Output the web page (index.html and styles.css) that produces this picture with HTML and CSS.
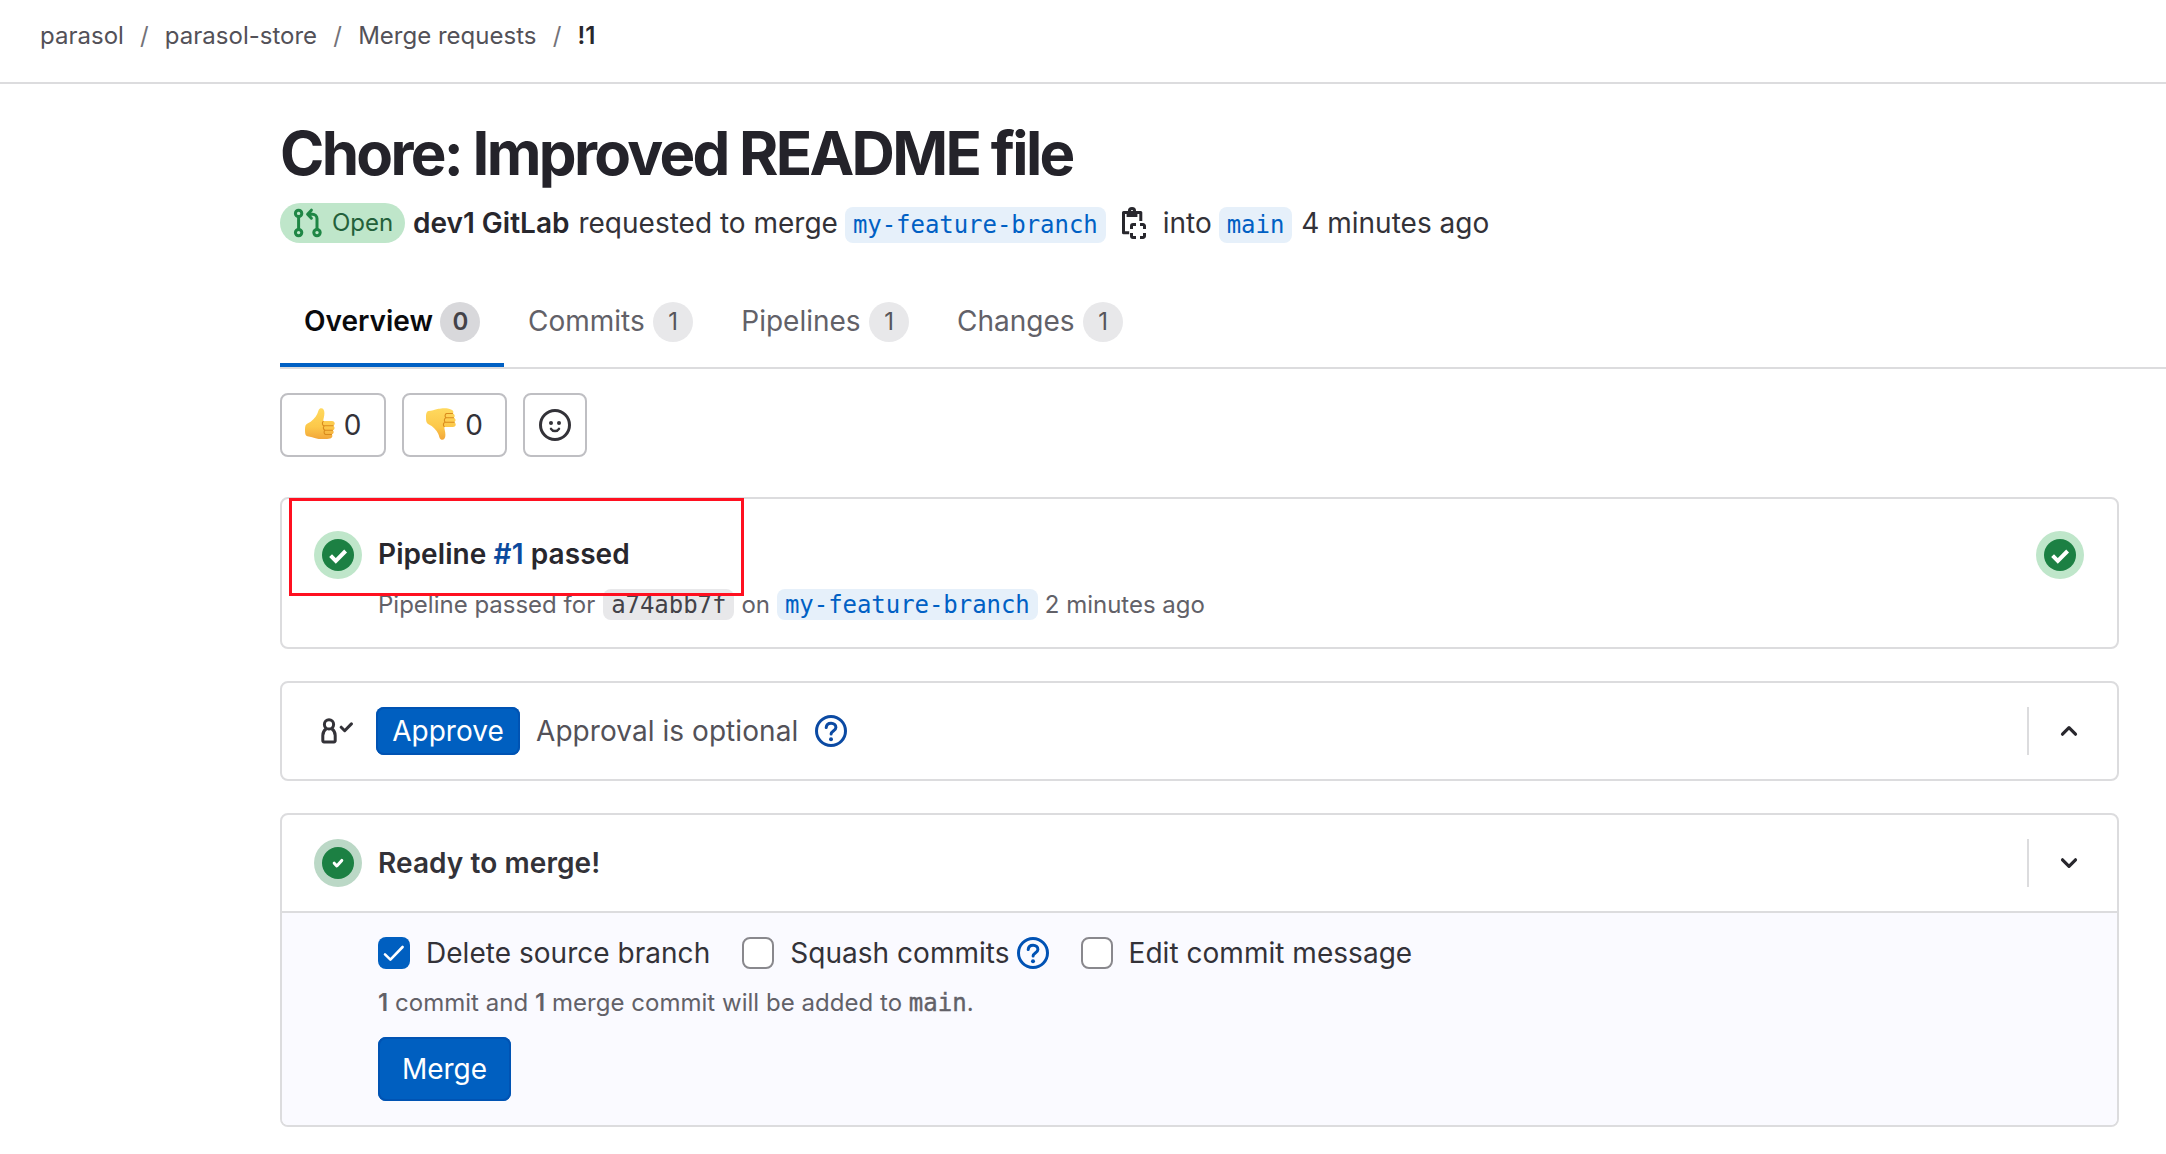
FILE: index.html
```html
<!DOCTYPE html>
<html lang="en">
<head>
<meta charset="utf-8">
<title>Chore: Improved README file (!1)</title>
<link rel="stylesheet" href="styles.css">
</head>
<body>
<svg class="defs" aria-hidden="true">
  <defs>
    <linearGradient id="skin" x1="0" y1="0" x2="0" y2="1">
      <stop offset="0" stop-color="#ffd95e"/>
      <stop offset=".6" stop-color="#fcc84a"/>
      <stop offset="1" stop-color="#f2a63a"/>
    </linearGradient>
    <symbol id="question" viewBox="0 0 16 16">
      <circle cx="8" cy="8" r="7.25" fill="none" stroke="currentColor" stroke-width="1.5"/>
      <path d="M5.6 6.3C5.7 4.9 6.7 4.1 8.05 4.1c1.4 0 2.4.85 2.4 2.1 0 1.7-2.4 1.9-2.4 3.3" fill="none" stroke="currentColor" stroke-width="1.5" stroke-linecap="round"/>
      <circle cx="8" cy="12.1" r="1" fill="currentColor"/>
    </symbol>
    <symbol id="chevron" viewBox="0 0 16 16">
      <path d="M4.75 6.4 8 9.65l3.25-3.25" fill="none" stroke="currentColor" stroke-width="1.6" stroke-linecap="round" stroke-linejoin="round"/>
    </symbol>
    <symbol id="check-big" viewBox="0 0 16 16">
      <path d="M4.3 8.3 6.9 10.9 11.8 6" fill="none" stroke="#fff" stroke-width="2"/>
    </symbol>
    <symbol id="check-small" viewBox="0 0 16 16">
      <path d="M6.1 8.1 7.4 9.5 9.9 6.7" fill="none" stroke="#fff" stroke-width="1.5" stroke-linecap="round" stroke-linejoin="round"/>
    </symbol>
  </defs>
</svg>

<nav class="breadcrumbs">
  <a class="crumb">parasol</a><span class="sep">/</span><a class="crumb">parasol-store</a><span class="sep">/</span><a class="crumb">Merge requests</a><span class="sep">/</span><b class="crumb-current">!1</b>
</nav>

<main class="content">
  <h1 class="title">Chore: Improved README file</h1>

  <div class="meta">
    <span class="state">
      <svg class="icon" viewBox="0 0 16 16" fill="none" stroke="currentColor" stroke-width="1.5" stroke-linecap="round" stroke-linejoin="round"><circle cx="3.3" cy="3.2" r="1.6"/><circle cx="3.3" cy="12.8" r="1.6"/><circle cx="12.5" cy="12.8" r="1.6"/><path d="M3.3 4.8v6.4M12.5 11.2V5.8a2.2 2.2 0 0 0-2.2-2.2H8M9.7 1.6 7.8 3.6l1.9 2"/></svg>
      <span>Open</span>
    </span>
    <b class="author">dev1 GitLab</b>
    <span class="phrase">requested to merge</span>
    <a class="ref ref-lg">my-feature-branch</a>
    <svg class="icon copy" viewBox="0 0 16 16" fill="none" stroke="currentColor" stroke-width="1.5" stroke-linejoin="round"><path d="M5.6 12.9H2.75V2.75h8.65V7"/><circle cx="7" cy="2.1" r="1.3"/><path d="M4.3 3h5.4v2H4.3z" fill="currentColor" stroke="none"/><path d="M6.75 11V9.500a.75.75 0 0 1 .75-.75H9M11 8.750h1.500a.75.75 0 0 1 .75.75V11M6.750 13v1.500a.75.75 0 0 0 .75.75H9M11 15.250h1.500a.75.75 0 0 0 .75-.75V13"/></svg>
    <span class="into">into</span>
    <a class="ref ref-lg">main</a>
    <span class="when">4 minutes ago</span>
  </div>

  <div class="tabs">
    <a class="tab active"><span>Overview</span><span class="count">0</span></a>
    <a class="tab"><span>Commits</span><span class="count">1</span></a>
    <a class="tab"><span>Pipelines</span><span class="count">1</span></a>
    <a class="tab"><span>Changes</span><span class="count">1</span></a>
  </div>

  <div class="awards">
    <button class="award"><svg class="thumb" viewBox="0 0 30 32"><path fill="url(#skin)" d="M15 .5c2.6-1 4.4 1.2 4.4 4.5 0 3-.9 5.5-1.2 8h8.600c3.600.2 3.700 4 1.300 4.800 2.200 1 1.700 4-.4 4.500 1.700 1 1.100 3.800-.9 4.200 1.300 1.400.3 3.500-1.800 4-3 .8-9.200.7-12.500.2C8 30 6 28.500 2.500 28.200.3 28 0 25 0 22c0-3.500.3-5.500 2.500-6.500 4.500-2 8-6 9.700-9.500 1-2 1-4.500 2.800-5.500z"/><path fill="none" stroke="#d98a1c" stroke-width="1.1" stroke-linecap="round" d="M18.200 13.300c-1.500 1.700-.8 4.200 1 4.500h9M19.500 17.800c-1.900.9-1.300 4 .5 4.500h7.500M20 22.300c-1.500 1-1 3.700.5 4.200h6"/></svg><span>0</span></button>
    <button class="award"><svg class="thumb" viewBox="0 0 30 32"><path fill="url(#skin)" d="M15 31.500c2.600 1 4.400-1.200 4.400-4.500 0-3-.9-5.500-1.200-8h8.600c3.600-.2 3.700-4 1.300-4.800 2.200-1 1.700-4-.4-4.500 1.700-1 1.100-3.800-.9-4.200 1.300-1.400.3-3.500-1.800-4C22 -.3 15.800 0 12.500.8 8 1.800 6 2.800 2.500 3 .3 3.300 0 6.500 0 9.500c0 3.500.3 5.700 2.500 6.700 4.500 2 8 6 9.700 9.500 1 2 1 4.800 2.800 5.800z"/><path fill="none" stroke="#d98a1c" stroke-width="1.1" stroke-linecap="round" d="M18.200 18.700c-1.500-1.700-.8-4.200 1-4.500h9M19.500 14.200c-1.900-.9-1.300-4 .5-4.500h7.500M20 9.700c-1.500-1-1-3.700.5-4.200h6"/></svg><span>0</span></button>
    <button class="award award-add"><svg class="icon" viewBox="0 0 16 16"><circle cx="8" cy="8" r="7.25" fill="none" stroke="currentColor" stroke-width="1.5"/><circle cx="6" cy="7" r="1" fill="currentColor"/><circle cx="10" cy="7" r="1" fill="currentColor"/><path d="M6 9.9c.9 1.5 3.1 1.5 4 0" fill="none" stroke="currentColor" stroke-width="1.2" stroke-linecap="round"/></svg></button>
  </div>

  <section class="card pipeline">
    <span class="status"><svg class="dot"><use href="#check-big"/></svg></span>
    <div class="pipeline-text">
      <h2 class="heading heading-strong">Pipeline <a class="link">#1</a> passed</h2>
      <p class="detail"><span class="passed-for">Pipeline passed for</span><code class="ref sha">a74abb7f</code><span>on</span><a class="ref">my-feature-branch</a><span>2 minutes ago</span></p>
    </div>
    <span class="status"><svg class="dot"><use href="#check-big"/></svg></span>
    <div class="highlight"></div>
  </section>

  <section class="card row">
    <svg class="icon approver" viewBox="0 0 16 16" fill="none" stroke="currentColor" stroke-width="1.5" stroke-linejoin="round"><circle cx="4" cy="4.700" r="2.300"/><path d="M2.600 6.900C1.500 7.700.9 8.900.9 10.200v2.600c0 .4.25.65.65.65h4.900c.4 0 .65-.25.65-.65v-2.600c0-1.300-.6-2.500-1.700-3.300"/><path stroke-linecap="round" d="m10.100 6.100 1.750 1.750 3.350-3.400"/></svg>
    <button class="btn approve">Approve</button>
    <span class="optional">Approval is optional</span>
    <svg class="icon help"><use href="#question"/></svg>
    <span class="toggle"><svg class="icon flip"><use href="#chevron"/></svg></span>
  </section>

  <section class="card merge">
    <div class="row merge-head">
      <span class="status status-ready"><svg class="dot"><use href="#check-small"/></svg></span>
      <h2 class="heading">Ready to merge!</h2>
      <span class="toggle"><svg class="icon"><use href="#chevron"/></svg></span>
    </div>
    <div class="merge-body">
      <div class="options">
        <label class="option"><span class="box checked"><svg viewBox="0 0 16 16"><path d="M3.500 8.700 6.200 11.300 12.300 5" fill="none" stroke="#fff" stroke-width="1.300" stroke-linecap="round" stroke-linejoin="round"/></svg></span><span class="opt-text">Delete source branch</span></label>
        <label class="option"><span class="box"></span><span class="opt-text">Squash commits</span><svg class="icon help opt-help"><use href="#question"/></svg></label>
        <label class="option"><span class="box"></span><span class="opt-text">Edit commit message</span></label>
      </div>
      <p class="summary"><b>1</b> commit and <b>1</b> merge commit will be added to <span class="branch">main</span>.</p>
      <button class="btn merge-btn">Merge</button>
    </div>
  </section>
</main>
</body>
</html>
```
FILE: styles.css
```css
* { box-sizing: border-box; }

body {
  margin: 0;
  background: #fff;
  color: #333238;
  font: 400 28px/40px Inter, "Liberation Sans", sans-serif;
  white-space: nowrap;
}

h1, h2, p { margin: 0; }
button { font: inherit; color: inherit; padding: 0; }
b { font-weight: 600; }
.defs { position: absolute; width: 0; height: 0; }
.icon { width: 32px; height: 32px; flex: none; display: block; }

.breadcrumbs {
  display: flex;
  height: 84px;
  padding: 20px 0 0 40px;
  border-bottom: 2px solid #dcdcde;
  font-size: 24px;
  line-height: 32px;
  letter-spacing: 0.01px;
  color: #535158;
}
.sep { width: 41px; text-align: center; color: #737278; }
.crumb-current { color: #28272d; }

.content { padding: 37px 47px 0 280px; }

.title {
  height: 82px;
  font-size: 60px;
  line-height: 64px;
  font-weight: 650;
  letter-spacing: -2.7px;
  color: #24232a;
}

.meta { display: flex; height: 40px; }
.state {
  display: flex;
  align-items: center;
  width: 125px;
  height: 40px;
  padding-left: 12px;
  gap: 8px;
  border-radius: 20px;
  background: #bfe6ca;
  color: #1f8645;
  font-size: 24px;
}
.state span { color: #23603a; }
.author { margin-left: 8px; color: #28272d; }
.phrase { margin-left: 9px; }

.ref {
  display: block;
  height: 31px;
  padding: 0 8px;
  border-radius: 8px;
  background: #e6f0fa;
  color: #0060c4;
  font: 24px/32px "DejaVu Sans Mono", monospace;
  letter-spacing: -0.05px;
}
.ref-lg { height: 36px; line-height: 37px; margin: 4px 0 0 7px; }
.copy { margin: 4px 13px 0 12px; color: #28272d; }
.when { margin-left: 9px; }

.tabs {
  display: flex;
  height: 86px;
  margin: 40px -47px 0 0;
  border-bottom: 2px solid #dcdcde;
  color: #626168;
}
.tab { display: flex; height: 84px; padding: 18px 24px 0; gap: 8.5px; }
.tab.active { width: 224px; gap: 7.5px; border-bottom: 4px solid #0060c4; color: #0a0a0c; font-weight: 600; }
.count {
  flex: none;
  width: 40px;
  height: 40px;
  margin-top: 1px;
  border-radius: 20px;
  background: #e8e8ea;
  color: #56555b;
  font-size: 24px;
  text-align: center;
}
.active .count { background: #d8d8db; color: #434248; }

.awards { display: flex; gap: 16px; margin-top: 24px; }
.award {
  display: flex;
  align-items: center;
  justify-content: center;
  gap: 9px;
  width: 106px;
  height: 64px;
  border: 2px solid #bfbfc3;
  border-radius: 8px;
  background: #fff;
}
.award + .award { width: 105px; }
.award.award-add { width: 64px; }
.thumb { width: 30px; height: 32px; margin-top: -2px; }

.card { margin-top: 32px; border: 2px solid #dcdcde; border-radius: 8px; }

.pipeline {
  position: relative;
  display: flex;
  height: 152px;
  margin-top: 40px;
  padding: 32px 33px 0 32px;
}
.status {
  display: flex;
  align-items: center;
  justify-content: center;
  flex: none;
  width: 48px;
  height: 48px;
  border-radius: 50%;
  background: #bfe6ca;
}
.dot { width: 32px; height: 32px; border-radius: 50%; background: #1c8043; }
.status-ready { background: #bbd8c6; }
.pipeline-text { flex: 1; padding: 3px 0 0 16px; }
.heading { font-size: 28px; line-height: 40px; font-weight: 600; letter-spacing: 0.08px; color: #333238; }
.heading-strong { color: #28272d; }
.link { color: #0b4a9e; }
.detail {
  display: flex;
  gap: 7px;
  margin-top: 15px;
  font-size: 24px;
  line-height: 32px;
  color: #626168;
}
.passed-for { margin-right: 1px; }
.sha { background: #e8e8ea; color: #434248; }
.highlight {
  position: absolute;
  left: 7px;
  top: -1px;
  width: 455px;
  height: 98px;
  border: 3px solid #ff1020;
}

.row { display: flex; align-items: center; height: 100px; padding: 0 32px; }
.approver { margin-left: 7px; }
.btn {
  border: 0;
  border-radius: 8px;
  background: #005fc0;
  box-shadow: inset 0 0 0 2px #0053b3;
  color: #fff;
}
.approve { width: 144px; height: 48px; margin-left: 23px; }
.optional { margin-left: 16px; letter-spacing: 0.06px; color: #535158; }
.help { color: #0b4aa3; margin-left: 17px; }
.toggle { margin-left: auto; height: 48px; padding: 8px 0 8px 24px; border-left: 2px solid #dcdcde; color: #28272d; }
.flip { transform: rotate(180deg); }

.merge { height: 314px; overflow: hidden; }
.merge-head { height: 98px; border-bottom: 2px solid #dcdcde; }
.merge-head .heading { margin-left: 16px; }
.merge-body { height: 214px; padding: 20px 0 0 96px; background: #fafaff; }
.options { display: flex; gap: 32px; height: 40px; }
.option { display: flex; align-items: center; letter-spacing: 0.03px; }
.box { width: 32px; height: 32px; border: 2px solid #89888d; border-radius: 8px; background: #fff; }
.box.checked { border: 0; background: #005fc0; }
.box svg { display: block; width: 32px; height: 32px; }
.opt-text { margin-left: 16px; }
.opt-help { margin-left: 7px; color: #0052b4; }
.summary { margin-top: 14px; height: 32px; font-size: 24px; line-height: 32px; letter-spacing: 0.03px; color: #626168; }
.branch { font-family: "DejaVu Sans Mono", monospace; -webkit-text-stroke: 0.4px currentColor; }
.merge-btn { display: block; width: 133px; height: 64px; margin-top: 18px; }
```
